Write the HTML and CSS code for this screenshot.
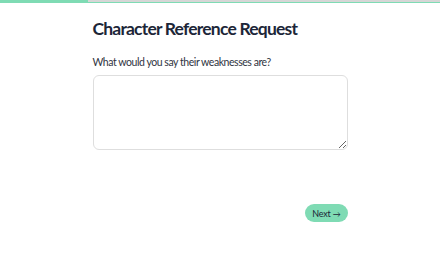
FILE: index.html
```html
<html>
	<head>
		<link rel="stylesheet" href="styles.css">
	</head>
	<body>
		<div class="progress">
			<div class="bar"></div>
		</div>

		<div class="wrap">
			<h1>Character Reference Request</h1>

			<label class="question" for="answer">What would you say their weaknesses are?</label>
			<textarea id="answer" class="answer"></textarea>

			<div class="actions">
				<button class="next">Next <span class="arrow">&#8594;</span></button>
			</div>
		</div>
	</body>
</html>
```

FILE: styles.css
```css
*{
	margin:0;
	padding:0;
	box-sizing:border-box;
}
body{
	font-family:Lato,"Liberation Sans",sans-serif;
	background:#fff;
	color:#1f2a3c;
}
.progress{
	height:3px;
	background:#d6d6d6;
	border-bottom:1px solid #7fdbb4;
}
.bar{
	width:88px;
	height:2px;
	background:#7fdbb4;
}
.wrap{
	width:255px;
	margin:0 auto;
	padding-top:16px;
}
h1{
	font-size:17.5px;
	font-weight:700;
	letter-spacing:-0.8px;
	line-height:20px;
	color:#1c2638;
}
.question{
	display:block;
	margin-top:16px;
	font-size:10.5px;
	letter-spacing:-0.45px;
	line-height:14px;
	color:#2f3441;
}
.answer{
	display:block;
	width:255px;
	height:75px;
	margin-top:6px;
	border:1px solid #dedede;
	border-radius:6px;
	resize:vertical;
	font-family:inherit;
}
.actions{
	display:flex;
	justify-content:flex-end;
	margin-top:54px;
}
.next{
	height:18px;
	padding:0 7px;
	border:none;
	border-radius:9px;
	background:#7fdbb4;
	color:#1c2638;
	font-family:Lato,"Liberation Sans",sans-serif;
	font-size:9px;
	letter-spacing:-0.2px;
}
.arrow{
	font-size:8px;
}
```
